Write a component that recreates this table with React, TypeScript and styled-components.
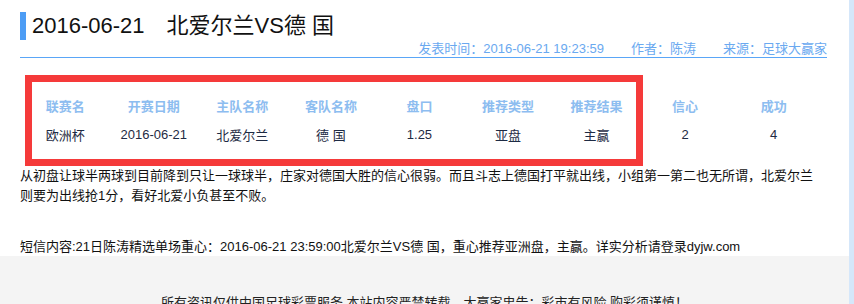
import styled, { createGlobalStyle } from 'styled-components';

const GlobalStyle = createGlobalStyle`
    html, body {
        margin: 0;
        padding: 0;
        background: #ffffff;
    }

    body {
        font-family: "Liberation Sans", "Noto Sans CJK SC", sans-serif;
        color: #222;
    }
`;

const Page = styled.div`
    display: flex;
    width: 854px;
    height: 304px;
    overflow: hidden;
    position: relative;
`;

const Main = styled.div`
    width: 849px;
    display: flex;
    flex-direction: column;
`;

const SideStrip = styled.div`
    flex: 1;
    background: #d5e7fa;
`;

const Content = styled.div`
    padding: 0 20px;
`;

const Header = styled.div`
    width: 807px;
    height: 58px;
    box-sizing: border-box;
    border-bottom: 1px solid #5aa6f7;
    padding-top: 12px;
`;

const TitleRow = styled.div`
    display: flex;
    align-items: center;
    height: 28px;
`;

const TitleBar = styled.span`
    width: 6px;
    height: 28px;
    background: #4d9df5;
    margin-right: 6px;
`;

const Title = styled.h1`
    margin: 0;
    font-size: 22px;
    font-weight: 400;
    color: #111;
    line-height: 28px;
`;

const Meta = styled.div`
    display: flex;
    justify-content: flex-end;
    gap: 27px;
    font-size: 13px;
    line-height: 14px;
    color: #6aa9f0;
    margin-top: 2px;
`;

const Table = styled.table`
    width: 797px;
    margin: 33px 0 0 1px;
    border-collapse: collapse;
    table-layout: fixed;
    font-size: 13px;

    th, td {
        text-align: center;
        height: 29px;
        padding: 0;
    }

    th {
        color: #8dbdf0;
        font-weight: 700;
    }

    td {
        color: #1e2b44;
    }
`;

const Analysis = styled.p`
    width: 800px;
    margin: 17px 0 0;
    font-size: 13px;
    line-height: 20px;
    color: #111;
`;

const Sms = styled.p`
    margin: 33px 0 0;
    font-size: 13px;
    line-height: 16px;
    color: #111;
`;

const Footer = styled.div`
    flex: 1;
    background: #f4f4f4;
    margin-top: 1px;
    padding-top: 38px;
    text-align: center;
    font-size: 13px;
    line-height: 18px;
    color: #222;
`;

const Highlight = styled.div`
    position: absolute;
    left: 25px;
    top: 75px;
    width: 618px;
    height: 91px;
    box-sizing: border-box;
    border: 7px solid #f53a3a;
    pointer-events: none;
`;

const columns = ['联赛名', '开赛日期', '主队名称', '客队名称', '盘口', '推荐类型', '推荐结果', '信心', '成功'];
const row = ['欧洲杯', '2016-06-21', '北爱尔兰', '德 国', '1.25', '亚盘', '主赢', '2', '4'];

export default function App() {
    return (
        <Page>
            <GlobalStyle />
            <Main>
                <Content>
                    <Header>
                        <TitleRow>
                            <TitleBar />
                            <Title>2016-06-21　北爱尔兰VS德 国</Title>
                        </TitleRow>
                        <Meta>
                            <span>发表时间：2016-06-21 19:23:59</span>
                            <span>作者：陈涛</span>
                            <span>来源：足球大赢家</span>
                        </Meta>
                    </Header>

                    <Table>
                        <thead>
                            <tr>
                                {columns.map(c => <th key={c}>{c}</th>)}
                            </tr>
                        </thead>
                        <tbody>
                            <tr>
                                {row.map((v, i) => <td key={i}>{v}</td>)}
                            </tr>
                        </tbody>
                    </Table>

                    <Analysis>
                        从初盘让球半两球到目前降到只让一球球半，庄家对德国大胜的信心很弱。而且斗志上德国打平就出线，小组第一第二也无所谓，北爱尔兰则要为出线抢1分，看好北爱小负甚至不败。
                    </Analysis>

                    <Sms>
                        短信内容:21日陈涛精选单场重心：2016-06-21 23:59:00北爱尔兰VS德 国，重心推荐亚洲盘，主赢。详实分析请登录dyjw.com
                    </Sms>
                </Content>

                <Footer>
                    所有资讯仅供中国足球彩票服务 本站内容严禁转载，大赢家忠告：彩市有风险 购彩须谨慎！
                </Footer>
            </Main>
            <SideStrip />
            <Highlight />
        </Page>
    )
}
